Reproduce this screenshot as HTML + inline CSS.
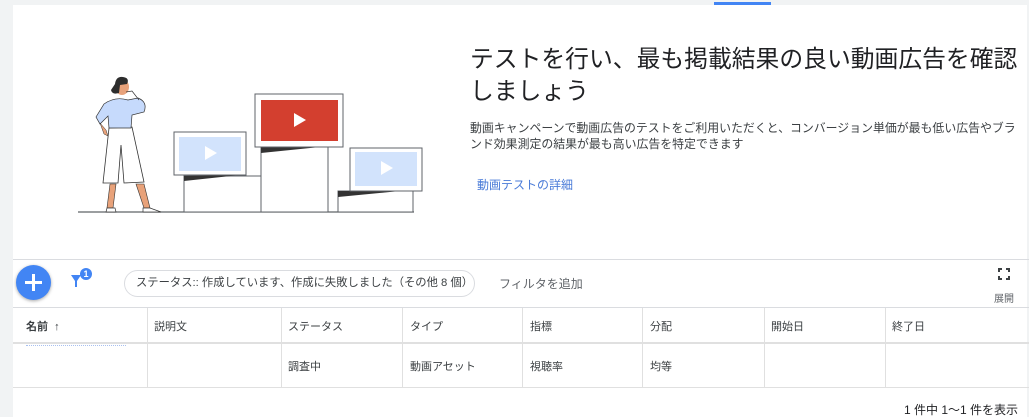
<!DOCTYPE html>
<html><head><meta charset="utf-8"><style>
*{margin:0;padding:0;box-sizing:border-box}
body{width:1029px;height:417px;background:#fff;position:relative;overflow:hidden;font-family:"Liberation Sans","Noto Sans CJK JP",sans-serif;color:#3c4043}
.abs{position:absolute}
.t{white-space:nowrap}
</style></head><body>
<div class="abs" style="left:0;top:0;width:1029px;height:5px;background:#f1f3f4"></div>
<div class="abs" style="left:714px;top:2px;width:57px;height:3px;background:#4285f4"></div>
<div class="abs" style="left:0;top:0;width:13px;height:417px;background:#f1f3f4"></div>
<div class="abs" style="left:1027px;top:0;width:2px;height:417px;background:#f1f3f4"></div>

<svg class="abs" style="left:60px;top:60px" width="370" height="160" viewBox="0 0 370 160">
<line x1="18" y1="152" x2="354" y2="152" stroke="#5f6368" stroke-width="1.2"/>
<rect x="124" y="116" width="86" height="36" fill="#fff" stroke="#5f6368"/>
<rect x="201" y="87" width="67" height="65" fill="#fff" stroke="#5f6368"/>
<rect x="278" y="131" width="75" height="21" fill="#fff" stroke="#5f6368"/>
<polygon points="124,116 180,115 124,121" fill="#333"/>
<polygon points="201,87 260,87 201,93" fill="#333"/>
<polygon points="278,131 340,131 278,137" fill="#333"/>
<rect x="114" y="72" width="72" height="43" fill="#fff" stroke="#5f6368"/>
<rect x="119" y="77" width="62" height="34" fill="#d2e3fc"/>
<polygon points="145,86 145,100 157,93" fill="#fff"/>
<rect x="195" y="34" width="88" height="53" fill="#fff" stroke="#5f6368"/>
<rect x="201" y="40" width="77" height="41" fill="#d33f2f"/>
<polygon points="234,53 234,67 246,60" fill="#fff"/>
<rect x="290" y="88" width="72" height="43" fill="#fff" stroke="#5f6368"/>
<rect x="295" y="92" width="62" height="34" fill="#d2e3fc"/>
<polygon points="321,101 321,115 333,108" fill="#fff"/>
<path d="M50,124 L47,148 L53,148 L56,124Z M76,124 L84,148 L90,148 L84,124Z" fill="#e8a27a" stroke="#333" stroke-width=".6"/>
<path d="M47,148 L55,148 L56,152 L46,152Z M83,148 L90,148 L101,152 L83,152Z" fill="#fff" stroke="#333" stroke-width=".7"/>
<path d="M49,68 L72,67 L84,122 L64,123 L61,85 L58,123 L43,123Z" fill="#fff" stroke="#333" stroke-width=".8"/>
<path d="M44,44 Q55,36 68,40 L78,38 Q88,42 84,52 L72,55 L71,68 L49,68 L48,56 L40,64 L36,57Z" fill="#c6dafc" stroke="#333" stroke-width=".7"/>
<path d="M40,63 L46,70 L48,76 L44,74 Z" fill="#e8a27a" stroke="#333" stroke-width=".5"/>
<ellipse cx="62" cy="27" rx="7" ry="8" fill="#e8a27a"/>
<path d="M55,24 Q56,16 63,17 Q70,18 67,24 L60,25 L59,33 Q52,35 51,30Z" fill="#2d2d2d"/>
<path d="M66,32 L72,31 L79,40" stroke="#333" fill="none" stroke-width=".7"/>
</svg>

<div class="abs t" style="left:470px;top:44px;font-size:23.8px;line-height:32px;color:#202124">テストを行い、最も掲載結果の良い動画広告を確認<br>しましょう</div>
<div class="abs t" style="left:470px;top:120px;font-size:11.9px;line-height:16px;color:#3c4043">動画キャンペーンで動画広告のテストをご利用いただくと、コンバージョン単価が最も低い広告やブラ<br>ンド効果測定の結果が最も高い広告を特定できます</div>
<div class="abs t" style="left:477px;top:176px;font-size:12px;color:#4a7bd8">動画テストの詳細</div>

<div class="abs" style="left:13px;top:259px;width:1016px;height:1px;background:#dadce0"></div>
<div class="abs" style="left:16px;top:265px;width:35px;height:35px;border-radius:50%;background:#4285f4;box-shadow:0 1px 3px rgba(0,0,0,.35)"></div>
<div class="abs" style="left:32px;top:274px;width:3px;height:17px;background:#fff"></div>
<div class="abs" style="left:25px;top:281px;width:17px;height:3px;background:#fff"></div>
<svg class="abs" style="left:70px;top:272px" width="12" height="16" viewBox="0 0 12 16"><path d="M1,3 L11,3 L7,9 L7,15 L5,15 L5,9Z" fill="#4285f4"/></svg>
<div class="abs" style="left:80px;top:268px;width:12px;height:12px;border-radius:50%;background:#4285f4;color:#fff;font-size:9px;font-weight:bold;text-align:center;line-height:12px">1</div>
<div class="abs t" style="left:124px;top:270px;width:351px;height:27px;border:1px solid #dadce0;border-radius:14px;font-size:11.3px;line-height:25px;padding-left:11px;color:#3c4043;overflow:hidden">ステータス:: 作成しています、作成に失敗しました（その他 8 個）</div>
<div class="abs t" style="left:499px;top:275px;font-size:12px;color:#5f6368">フィルタを追加</div>
<svg class="abs" style="left:998px;top:268px" width="12" height="12" viewBox="0 0 12 12" fill="none" stroke="#3c4043" stroke-width="2"><path d="M1,4V1H4M8,1H11V4M11,8V11H8M4,11H1V8"/></svg>
<div class="abs t" style="left:994px;top:290px;font-size:10px;color:#5f6368">展開</div>

<div class="abs" style="left:13px;top:307px;width:1016px;height:1px;background:#dadce0"></div>
<div class="abs" style="left:13px;top:342px;width:1016px;height:2px;background:#e0e0e0"></div>
<div class="abs" style="left:13px;top:387px;width:1016px;height:1px;background:#e0e0e0"></div>
<div class="abs" style="left:147px;top:308px;width:1px;height:80px;background:#e0e0e0"></div>
<div class="abs" style="left:281px;top:308px;width:1px;height:80px;background:#e0e0e0"></div>
<div class="abs" style="left:402px;top:308px;width:1px;height:80px;background:#e0e0e0"></div>
<div class="abs" style="left:522px;top:308px;width:1px;height:80px;background:#e0e0e0"></div>
<div class="abs" style="left:642px;top:308px;width:1px;height:80px;background:#e0e0e0"></div>
<div class="abs" style="left:764px;top:308px;width:1px;height:80px;background:#e0e0e0"></div>
<div class="abs" style="left:885px;top:308px;width:1px;height:80px;background:#e0e0e0"></div>

<div class="abs t" style="left:26px;top:318px;font-size:11px;font-weight:bold;color:#3c4043">名前 &nbsp;↑</div>
<div class="abs t" style="left:154px;top:318px;font-size:11px">説明文</div>
<div class="abs t" style="left:288px;top:318px;font-size:11px">ステータス</div>
<div class="abs t" style="left:410px;top:318px;font-size:11px">タイプ</div>
<div class="abs t" style="left:530px;top:318px;font-size:11px">指標</div>
<div class="abs t" style="left:650px;top:318px;font-size:11px">分配</div>
<div class="abs t" style="left:771px;top:318px;font-size:11px">開始日</div>
<div class="abs t" style="left:892px;top:318px;font-size:11px">終了日</div>
<div class="abs" style="left:26px;top:345px;width:100px;height:1px;border-top:1px dotted #a8c0f0"></div>
<div class="abs t" style="left:288px;top:358px;font-size:11px">調査中</div>
<div class="abs t" style="left:410px;top:358px;font-size:11px">動画アセット</div>
<div class="abs t" style="left:530px;top:358px;font-size:11px">視聴率</div>
<div class="abs t" style="left:650px;top:358px;font-size:11px">均等</div>
<div class="abs t" style="left:904px;top:401px;font-size:12px;color:#202124">1 件中 1〜1 件を表示</div>
</body></html>
